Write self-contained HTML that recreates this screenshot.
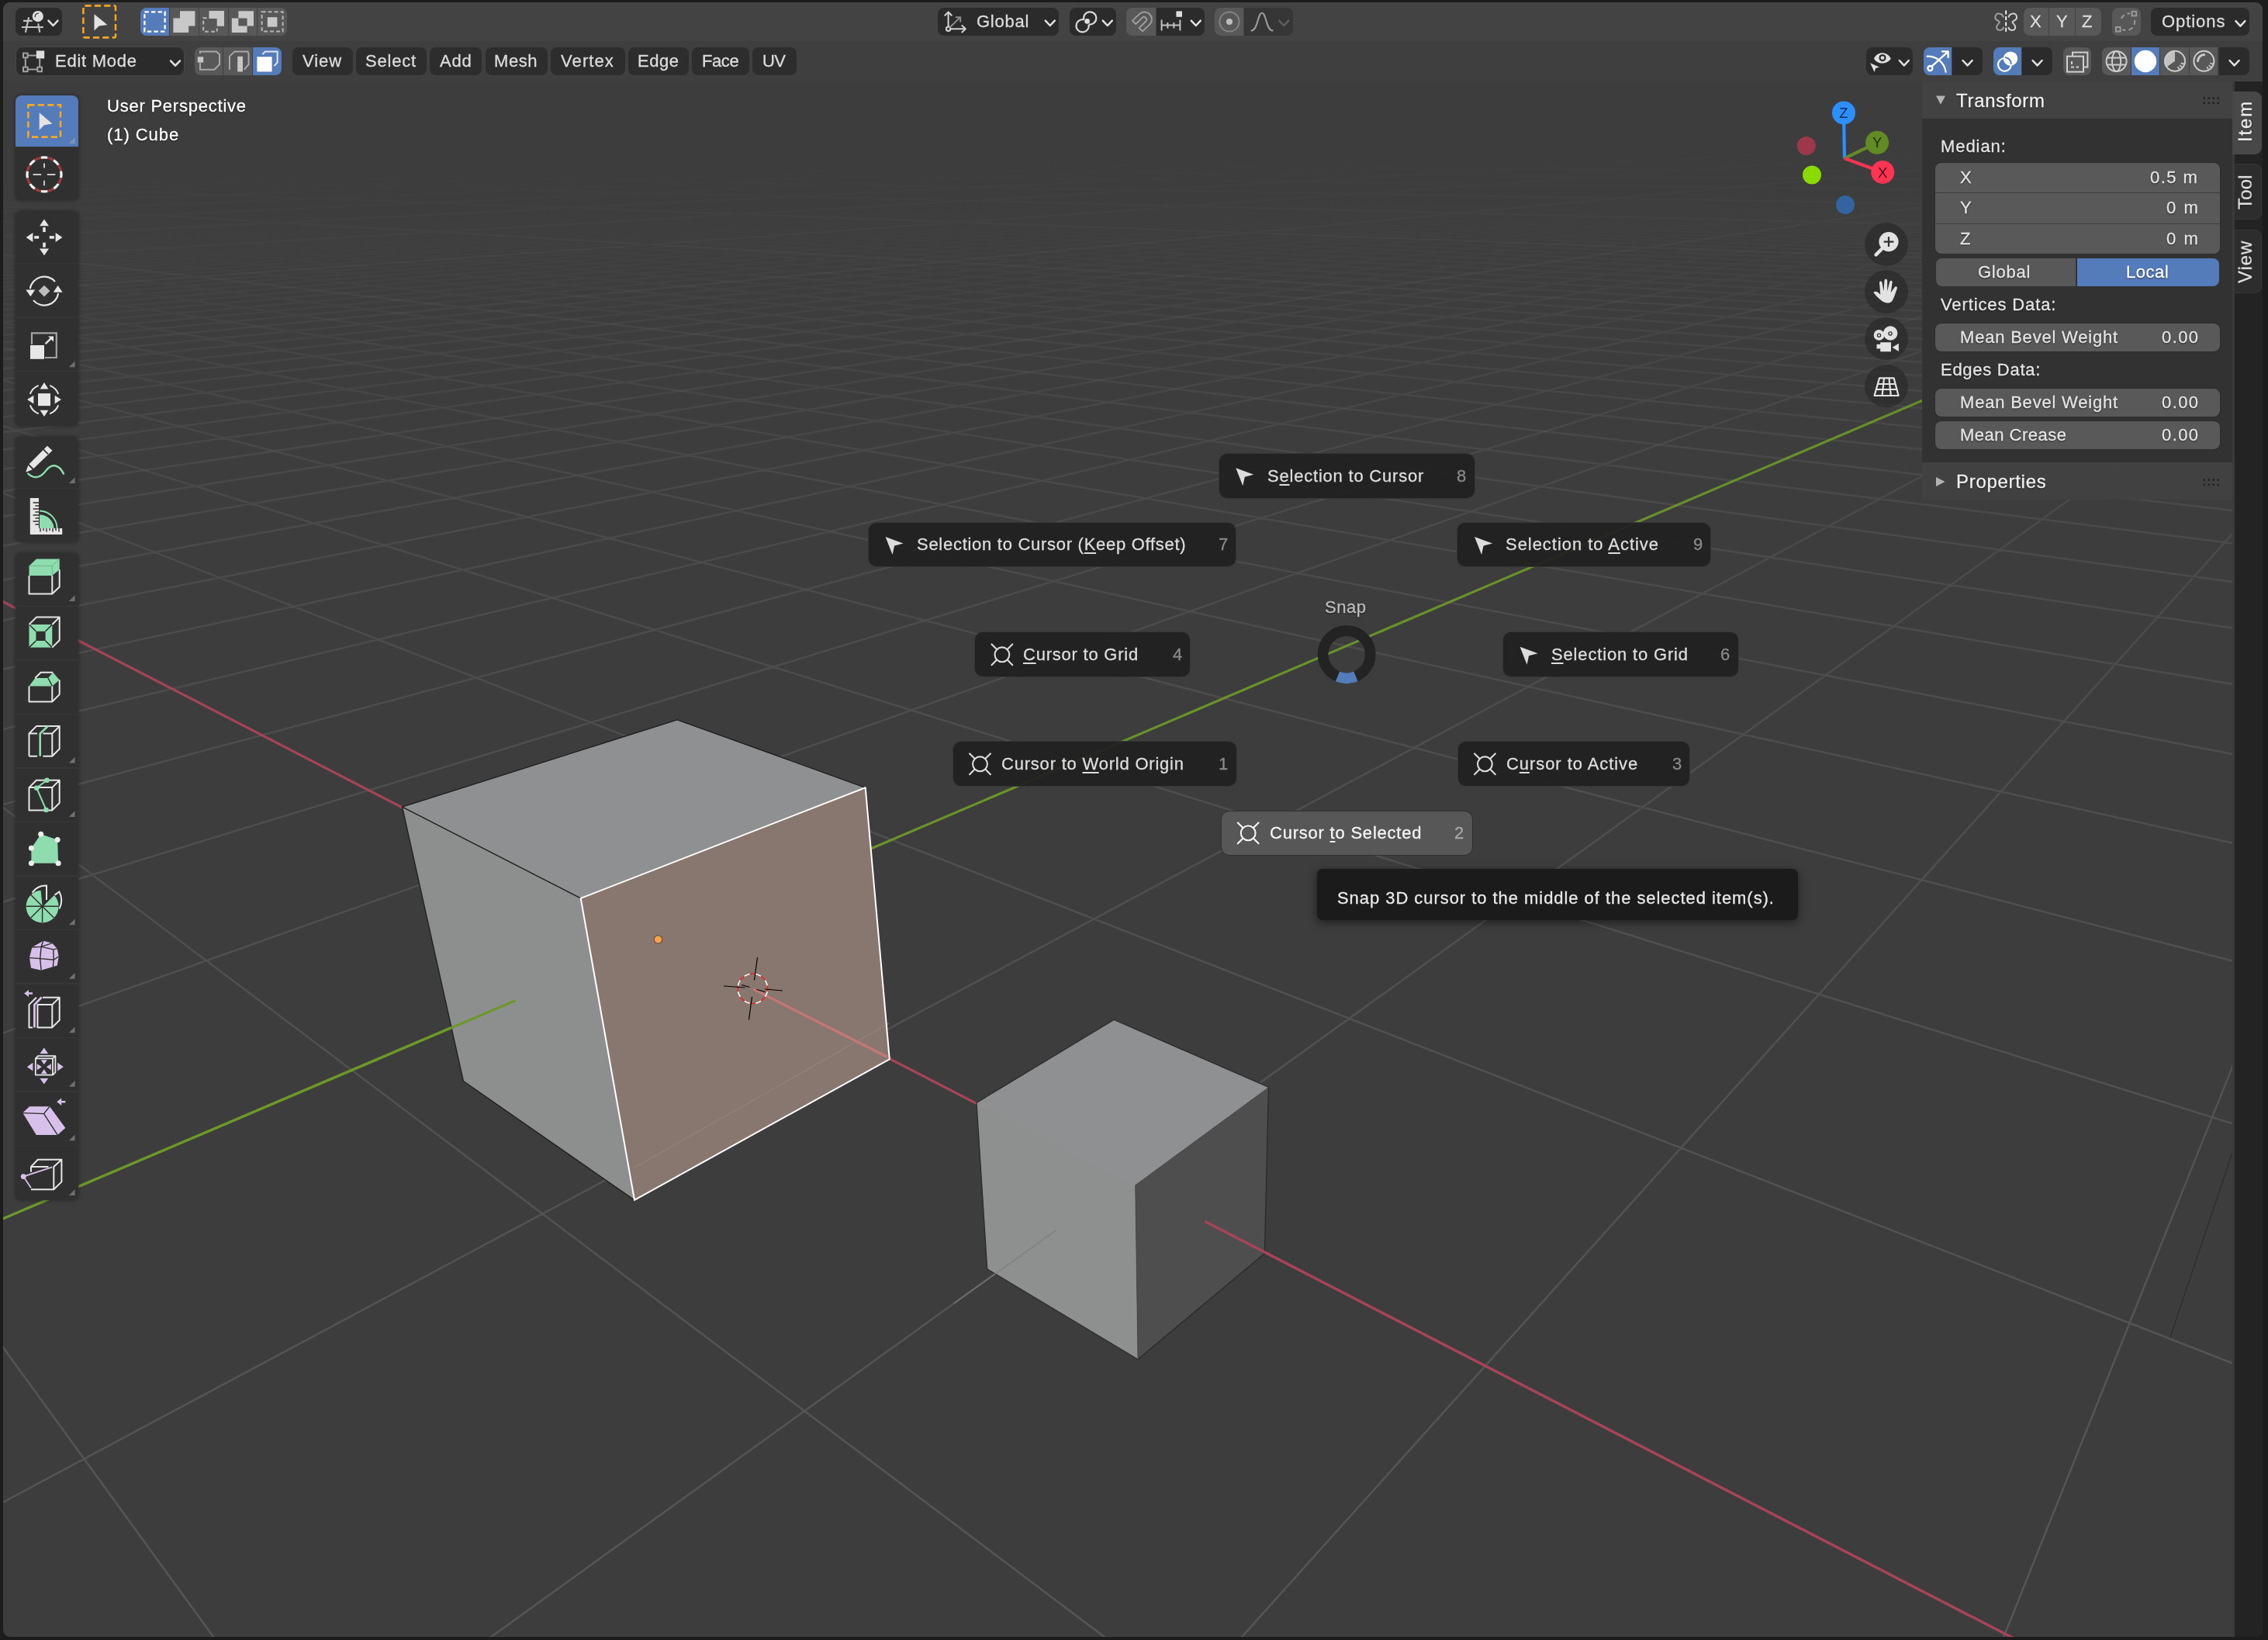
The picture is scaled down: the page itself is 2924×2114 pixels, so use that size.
<!DOCTYPE html>
<html><head><meta charset="utf-8"><title>Blender</title>
<style>
html,body{margin:0;padding:0;}
body{width:2924px;height:2114px;background:#1c1c1c;position:relative;overflow:hidden;font-family:"Liberation Sans",sans-serif;}
.a{position:absolute;box-sizing:border-box;}
.t{position:absolute;white-space:nowrap;font-family:"Liberation Sans",sans-serif;will-change:transform;-webkit-text-stroke:0.3px currentColor;}
.ts{position:absolute;white-space:nowrap;font-family:"Liberation Sans",sans-serif;will-change:transform;-webkit-text-stroke:0.3px currentColor;text-shadow:0 1px 2px rgba(0,0,0,.7);}
svg{position:absolute;left:0;top:0;}
u{text-decoration:underline;text-underline-offset:3px;text-decoration-thickness:1.5px;}
</style></head><body>

<div class="a" id="view" style="left:4px;top:3px;width:2913px;height:2107px;border-radius:9px;overflow:hidden;background:#3d3d3d;">
<svg width="2924" height="2114" viewBox="0 0 2924 2114" style="left:-4px;top:-3px;">
<defs><linearGradient id="g1" gradientUnits="userSpaceOnUse" x1="1460" y1="162" x2="1489.4" y2="2162"><stop offset="0.0000" stop-color="#565656" stop-opacity="0"/><stop offset="0.0475" stop-color="#565656" stop-opacity="0"/><stop offset="0.0700" stop-color="#565656" stop-opacity="0.09"/><stop offset="0.0920" stop-color="#565656" stop-opacity="0.16"/><stop offset="0.1370" stop-color="#565656" stop-opacity="0.32"/><stop offset="0.2270" stop-color="#565656" stop-opacity="0.48"/><stop offset="0.4320" stop-color="#565656" stop-opacity="0.67"/><stop offset="0.7870" stop-color="#565656" stop-opacity="0.91"/><stop offset="0.9750" stop-color="#565656" stop-opacity="0.97"/></linearGradient><linearGradient id="g10" gradientUnits="userSpaceOnUse" x1="1460" y1="162" x2="1489.4" y2="2162"><stop offset="0.0000" stop-color="#565656" stop-opacity="0"/><stop offset="0.0195" stop-color="#565656" stop-opacity="0"/><stop offset="0.0420" stop-color="#565656" stop-opacity="0.08"/><stop offset="0.0720" stop-color="#565656" stop-opacity="0.2"/><stop offset="0.1370" stop-color="#565656" stop-opacity="0.34"/><stop offset="0.2270" stop-color="#565656" stop-opacity="0.48"/><stop offset="0.4320" stop-color="#565656" stop-opacity="0.67"/><stop offset="0.7870" stop-color="#565656" stop-opacity="0.91"/><stop offset="0.9750" stop-color="#565656" stop-opacity="0.97"/></linearGradient><linearGradient id="gr" gradientUnits="userSpaceOnUse" x1="1460" y1="162" x2="1489.4" y2="2162"><stop offset="0.0000" stop-color="#ac4459" stop-opacity="0"/><stop offset="0.0195" stop-color="#ac4459" stop-opacity="0"/><stop offset="0.0500" stop-color="#ac4459" stop-opacity="0.35"/><stop offset="0.1000" stop-color="#ac4459" stop-opacity="0.7"/><stop offset="0.2000" stop-color="#ac4459" stop-opacity="0.9"/><stop offset="0.4320" stop-color="#ac4459" stop-opacity="0.96"/><stop offset="0.9750" stop-color="#ac4459" stop-opacity="1"/></linearGradient><linearGradient id="gg" gradientUnits="userSpaceOnUse" x1="1460" y1="162" x2="1489.4" y2="2162"><stop offset="0.0000" stop-color="#6c9828" stop-opacity="0"/><stop offset="0.0195" stop-color="#6c9828" stop-opacity="0"/><stop offset="0.0500" stop-color="#6c9828" stop-opacity="0.35"/><stop offset="0.1000" stop-color="#6c9828" stop-opacity="0.7"/><stop offset="0.2000" stop-color="#6c9828" stop-opacity="0.9"/><stop offset="0.4320" stop-color="#6c9828" stop-opacity="0.96"/><stop offset="0.9750" stop-color="#6c9828" stop-opacity="1"/></linearGradient></defs>
<path d="M-20.0 237.9L2431.1 162.7M-20.0 238.3L2437.1 162.7M-20.0 238.8L2443.2 162.6M-20.0 239.2L2449.3 162.5M-20.0 239.7L2455.4 162.5M-20.0 240.2L2461.5 162.4M-20.0 240.7L2467.6 162.4M-20.0 241.1L2473.8 162.3M-20.0 241.6L2480.0 162.2M-20.0 242.7L2492.4 162.1M-20.0 243.2L2498.6 162.0M-20.0 243.7L2504.9 162.0M-20.0 244.2L2511.2 161.9M-20.0 244.8L2517.5 161.8M-20.0 245.4L2523.8 161.8M-20.0 245.9L2530.2 161.7M-20.0 246.5L2536.6 161.6M-20.0 247.1L2543.0 161.6M-20.0 248.3L2555.8 161.4M-20.0 249.0L2562.3 161.4M-20.0 249.6L2568.8 161.3M-20.0 250.2L2575.3 161.2M-20.0 250.9L2581.9 161.2M-20.0 251.6L2588.4 161.1M-20.0 252.3L2595.0 161.0M-20.0 253.0L2601.6 160.9M-20.0 253.7L2608.2 160.9M-20.0 255.2L2621.6 160.7M-20.0 256.0L2628.3 160.7M-20.0 256.8L2635.0 160.6M-20.0 257.6L2641.8 160.5M-20.0 258.4L2648.5 160.5M-20.0 259.2L2655.3 160.4M-20.0 260.1L2662.2 160.3M-20.0 261.0L2669.0 160.2M-20.0 261.9L2675.9 160.2M-20.0 263.7L2689.7 160.0M-20.0 264.7L2696.7 160.0M-20.0 265.7L2703.6 159.9M-20.0 266.7L2710.6 159.8M-20.0 267.7L2717.7 159.7M-20.0 268.8L2724.7 159.7M-20.0 269.9L2731.8 159.6M-20.0 271.0L2738.9 159.5M-20.0 272.2L2746.0 159.4M-20.0 274.6L2760.4 159.3M-20.0 275.8L2767.6 159.2M-20.0 277.1L2774.8 159.1M-20.0 278.4L2782.1 159.1M-20.0 279.8L2789.4 159.0M-20.0 281.2L2796.7 158.9M-20.0 282.6L2804.0 158.8M-20.0 284.1L2811.4 158.8M-20.0 285.6L2818.8 158.7M-20.0 288.8L2833.7 158.5M-20.0 290.5L2841.2 158.4M-20.0 292.2L2848.7 158.4M-20.0 294.0L2856.3 158.3M-20.0 295.8L2863.8 158.2M-20.0 297.7L2871.4 158.1M-20.0 299.7L2879.1 158.0M-20.0 301.8L2886.7 158.0M-20.0 303.9L2894.4 157.9M-20.0 308.3L2909.9 157.7M-20.0 310.7L2917.7 157.6M-20.0 313.1L2925.5 157.6M-20.0 315.7L2933.3 157.5M-20.0 318.3L2941.2 157.4M-20.0 321.1L2944.0 157.6M-20.0 324.0L2944.0 158.0M-20.0 327.0L2944.0 158.3M-20.0 330.1L2944.0 158.7M-20.0 336.8L2944.0 159.6M-20.0 340.4L2944.0 160.0M-20.0 344.1L2944.0 160.5M-20.0 348.0L2944.0 161.0M-20.0 352.2L2944.0 161.5M-20.0 356.5L2944.0 162.1M-20.0 361.1L2944.0 162.7M-20.0 365.9L2944.0 163.3M-20.0 371.0L2944.0 163.9M-20.0 382.1L2944.0 165.3M-20.0 388.1L2944.0 166.1M-20.0 394.5L2944.0 166.9M-20.0 401.4L2944.0 167.8M-20.0 408.7L2944.0 168.7M-20.0 416.5L2944.0 169.7M-20.0 424.9L2944.0 170.8M-20.0 433.9L2944.0 171.9M-20.0 443.6L2944.0 173.2M-20.0 465.4L2944.0 175.9M-20.0 477.7L2944.0 177.5M-20.0 491.2L2944.0 179.2M-20.0 506.0L2944.0 181.1M-20.0 522.3L2944.0 183.2M-20.0 540.3L2944.0 185.5M-20.0 560.3L2944.0 188.0M-20.0 582.8L2944.0 190.9M-20.0 608.0L2944.0 194.1M-20.0 669.5L2944.0 201.9M-20.0 707.5L2944.0 206.7M-20.0 751.9L2944.0 212.4M-20.0 804.5L2944.0 219.1M-20.0 867.9L2944.0 227.1M-20.0 945.7L2944.0 237.0M-20.0 1043.4L2944.0 249.5M-20.0 1169.9L2944.0 265.5M-20.0 1703.8L292.6 2134.0M-20.0 1340.0L2944.0 287.2M-20.0 1022.9L1455.7 2134.0M-20.0 1949.2L2944.0 364.7M-20.0 626.3L2944.0 1782.9M599.8 2134.0L2944.0 445.0M-20.0 541.7L2944.0 1468.9M1579.5 2134.0L2944.0 614.7M-20.0 484.3L2944.0 1255.7M2573.7 2134.0L2944.0 1210.7M-20.0 442.8L2944.0 1101.4M-20.0 411.3L2944.0 984.7M-20.0 386.6L2944.0 893.2M-20.0 366.8L2944.0 819.6M-20.0 350.5L2944.0 759.1M-20.0 336.9L2944.0 708.5M-20.0 315.4L2944.0 628.6M-20.0 306.7L2944.0 596.6M-20.0 299.2L2944.0 568.4M-20.0 292.5L2944.0 543.6M-20.0 286.5L2944.0 521.5M-20.0 281.2L2944.0 501.6M-20.0 276.3L2944.0 483.8M-20.0 272.0L2944.0 467.6M-20.0 268.0L2944.0 452.8M-20.0 261.1L2944.0 427.0M-20.0 258.0L2944.0 415.7M-20.0 255.2L2944.0 405.2M-20.0 252.5L2944.0 395.4M-20.0 250.1L2944.0 386.4M-20.0 247.8L2944.0 378.0M-20.0 245.7L2944.0 370.1M-20.0 243.7L2944.0 362.7M-20.0 241.9L2944.0 355.8M-20.0 238.5L2944.0 343.2M-20.0 236.9L2944.0 337.5M-20.0 235.5L2944.0 332.0M-20.0 234.1L2944.0 326.9M-20.0 232.8L2944.0 322.0M-20.0 231.5L2944.0 317.3M-20.0 230.3L2944.0 312.9M-20.0 229.2L2944.0 308.7M-20.0 228.1L2944.0 304.7M-20.0 226.1L2944.0 297.3M-20.0 225.2L2944.0 293.8M-20.0 224.3L2944.0 290.5M-20.0 223.4L2944.0 287.3M-20.0 222.6L2944.0 284.3M-20.0 221.8L2944.0 281.3M-20.0 221.0L2944.0 278.5M-20.0 220.3L2944.0 275.8M-20.0 219.6L2944.0 273.2M-20.0 218.3L2944.0 268.3M-20.0 217.7L2944.0 266.0M-20.0 217.1L2944.0 263.8M-20.0 216.5L2944.0 261.6M-20.0 215.9L2944.0 259.5M-20.0 215.4L2944.0 257.5M-20.0 214.9L2944.0 255.6M-20.0 214.3L2944.0 253.7M-20.0 213.9L2944.0 251.8M-20.0 212.9L2944.0 248.4M-20.0 212.5L2944.0 246.7M-20.0 212.0L2944.0 245.1M-20.0 211.6L2944.0 243.5M-20.0 211.2L2944.0 242.0M-20.0 210.8L2944.0 240.5M-20.0 210.4L2944.0 239.1M-20.0 210.1L2944.0 237.7M-20.0 209.7L2944.0 236.4M-20.0 209.0L2944.0 233.8M-20.0 208.7L2944.0 232.5M-20.0 208.3L2944.0 231.3M-20.0 208.0L2944.0 230.1M-20.0 207.7L2944.0 229.0M-20.0 207.4L2944.0 227.9M-20.0 207.1L2944.0 226.8M-20.0 206.8L2944.0 225.7M-20.0 206.5L2944.0 224.7M-20.0 206.0L2944.0 222.7M-20.0 205.7L2944.0 221.7M-20.0 205.5L2944.0 220.7M-20.0 205.2L2944.0 219.8M-20.0 205.0L2944.0 218.9M-20.0 204.7L2944.0 218.0M-20.0 204.5L2944.0 217.2M-20.0 204.3L2944.0 216.3M-20.0 204.1L2944.0 215.5M-20.0 203.6L2944.0 213.9M-20.0 203.4L2944.0 213.1M-20.0 203.2L2944.0 212.4M-20.0 203.0L2944.0 211.6M-20.0 202.8L2944.0 210.9M-20.0 202.6L2944.0 210.2M-20.0 202.4L2944.0 209.5M-20.0 202.3L2944.0 208.8M-20.0 202.1L2944.0 208.1M-20.0 201.7L2944.0 206.8M-20.0 201.6L2944.0 206.2M-20.0 201.4L2944.0 205.6M-20.0 201.2L2944.0 205.0M-20.0 201.1L2944.0 204.4M-20.0 200.9L2944.0 203.8M-20.0 200.7L2944.0 203.2M-20.0 200.6L2944.0 202.6M-20.0 200.4L2944.0 202.1M-12.0 200.2L2944.0 201.0M-4.7 200.0L2944.0 200.5M2.5 199.9L2944.0 199.9M9.7 199.7L2944.0 199.4M16.8 199.6L2944.0 198.9M24.0 199.5L2944.0 198.4M31.1 199.3L2944.0 197.9M38.2 199.2L2944.0 197.5M45.2 199.0L2944.0 197.0" stroke="url(#g1)" stroke-width="2.5" fill="none"/>
<path d="M-20.0 237.5L2425.1 162.8M-20.0 242.1L2486.2 162.2M-20.0 247.7L2549.4 161.5M-20.0 254.5L2614.9 160.8M-20.0 262.8L2682.8 160.1M-20.0 273.4L2753.2 159.4M-20.0 287.2L2826.2 158.6M-20.0 306.1L2902.1 157.8M-20.0 333.4L2944.0 159.2M-20.0 376.4L2944.0 164.6M-20.0 454.0L2944.0 174.5M-20.0 636.7L2944.0 197.7M-20.0 325.3L2944.0 665.5M-20.0 264.4L2944.0 439.4M-20.0 240.1L2944.0 349.3M-20.0 227.1L2944.0 300.9M-20.0 218.9L2944.0 270.7M-20.0 213.4L2944.0 250.1M-20.0 209.3L2944.0 235.1M-20.0 206.3L2944.0 223.7M-20.0 203.8L2944.0 214.7M-20.0 201.9L2944.0 207.5M-19.3 200.3L2944.0 201.5M52.2 198.9L2944.0 196.5" stroke="url(#g10)" stroke-width="2.5" fill="none"/>
<path d="M-20.0 763.3L2639.2 2134.0" stroke="url(#gr)" stroke-width="3.1" fill="none"/>
<path d="M-20.0 1581.1L2944.0 317.8" stroke="url(#gg)" stroke-width="3.1" fill="none"/>
<path d="M2798 1723.5L2878 1486" stroke="#2c2c2c" stroke-width="1.2" fill="none"/>
<polygon points="873.1,927.8 518.6,1040.2 748.7,1157.9 1115.7,1015.3" fill="#8f9091"/>
<polygon points="518.6,1040.2 748.7,1157.9 818.0,1546.9 597.4,1393.5" fill="#8d8f8f"/>
<polygon points="748.7,1157.9 1115.7,1015.3 1146.8,1365.3 818.0,1546.9" fill="#88776e"/>
<path d="M818 1505L1146 1319" stroke="#968880" stroke-width="1.6" fill="none" opacity="0.55"/>
<path d="M971 1274.9L1144 1362.5" stroke="#c47776" stroke-width="3.1" fill="none"/>
<path d="M1115.7,1015.3L873.1,927.8L518.6,1040.2L597.4,1393.5L818.0,1546.9M518.6,1040.2L748.7,1157.9" stroke="#1e1e1e" stroke-width="1.3" fill="none" stroke-linejoin="round"/>
<polygon points="748.7,1157.9 1115.7,1015.3 1146.8,1365.3 818.0,1546.9" fill="none" stroke="#ffffff" stroke-width="2" stroke-linejoin="round"/>
<path d="M-20 1581.1L664.5 1289.8" stroke="#6c9828" stroke-width="3.1" fill="none"/>
<circle cx="848.4" cy="1211" r="5.2" fill="#ffa245" stroke="#6e5446" stroke-width="1.3"/>
<path d="M966.6 1255.4A19.3 19.3 0 0 1 974.2 1255.4" stroke="#ee2222" stroke-width="1.5" fill="none"/>
<path d="M974.2 1255.4A19.3 19.3 0 0 1 981.1 1258.3" stroke="#ffffff" stroke-width="1.5" fill="none"/>
<path d="M981.1 1258.3A19.3 19.3 0 0 1 986.4 1263.6" stroke="#ee2222" stroke-width="1.5" fill="none"/>
<path d="M986.4 1263.6A19.3 19.3 0 0 1 989.3 1270.5" stroke="#ffffff" stroke-width="1.5" fill="none"/>
<path d="M989.3 1270.5A19.3 19.3 0 0 1 989.3 1278.1" stroke="#ee2222" stroke-width="1.5" fill="none"/>
<path d="M989.3 1278.1A19.3 19.3 0 0 1 986.4 1285.0" stroke="#ffffff" stroke-width="1.5" fill="none"/>
<path d="M986.4 1285.0A19.3 19.3 0 0 1 981.1 1290.3" stroke="#ee2222" stroke-width="1.5" fill="none"/>
<path d="M981.1 1290.3A19.3 19.3 0 0 1 974.2 1293.2" stroke="#ffffff" stroke-width="1.5" fill="none"/>
<path d="M974.2 1293.2A19.3 19.3 0 0 1 966.6 1293.2" stroke="#ee2222" stroke-width="1.5" fill="none"/>
<path d="M966.6 1293.2A19.3 19.3 0 0 1 959.7 1290.3" stroke="#ffffff" stroke-width="1.5" fill="none"/>
<path d="M959.7 1290.3A19.3 19.3 0 0 1 954.4 1285.0" stroke="#ee2222" stroke-width="1.5" fill="none"/>
<path d="M954.4 1285.0A19.3 19.3 0 0 1 951.5 1278.1" stroke="#ffffff" stroke-width="1.5" fill="none"/>
<path d="M951.5 1278.1A19.3 19.3 0 0 1 951.5 1270.5" stroke="#ee2222" stroke-width="1.5" fill="none"/>
<path d="M951.5 1270.5A19.3 19.3 0 0 1 954.4 1263.6" stroke="#ffffff" stroke-width="1.5" fill="none"/>
<path d="M954.4 1263.6A19.3 19.3 0 0 1 959.7 1258.3" stroke="#ee2222" stroke-width="1.5" fill="none"/>
<path d="M959.7 1258.3A19.3 19.3 0 0 1 966.6 1255.4" stroke="#ffffff" stroke-width="1.5" fill="none"/>
<path d="M976.5 1234L972.5 1263.5M969.5 1285L965.5 1314.5M933 1271L960.5 1273M986 1275L1009 1277M956 1269.5L966.5 1272.5M975.5 1275.5L986.5 1278.5" stroke="#000" stroke-width="1.2" fill="none"/>
<polygon points="1436.2,1314.5 1259.0,1421.5 1463.7,1527.5 1635.5,1401.5" fill="#8f9091"/>
<polygon points="1259.0,1421.5 1463.7,1527.5 1467.0,1752.2 1272.7,1635.7" fill="#8e908f"/>
<polygon points="1463.7,1527.5 1635.5,1401.5 1630.4,1615.7 1467.0,1752.2" fill="#4f4e4f"/>
<path d="M1259.0,1421.5L1463.7,1527.5" stroke="#959697" stroke-width="1.2" fill="none" opacity="0.7"/>
<polygon points="1436.2,1314.5 1259.0,1421.5 1272.7,1635.7 1467.0,1752.2 1630.4,1615.7 1635.5,1401.5" fill="none" stroke="#2a2a2a" stroke-width="1.3" stroke-linejoin="round"/>
<path d="M1463.7,1527.5L1467.0,1752.2" stroke="#3c3c3c" stroke-width="1" fill="none" opacity="0.6"/>
<path d="M1230 1680L1361.5 1585.8" stroke="#7c7e7e" stroke-width="1.5" fill="none" opacity="0.8"/>
<path d="M1553.6 1574.5L2639.2 2134" stroke="#a84458" stroke-width="3.1" fill="none"/>
</svg>
</div>
<div class="a" style="left:4.0px;top:3.0px;width:2913.0px;height:50.0px;background:#434343;border-radius:9px 9px 0 0;"></div>
<div class="a" style="left:4.0px;top:53.0px;width:2913.0px;height:52.0px;background:rgba(66,66,66,0.45);"></div>
<div class="a" style="left:20.0px;top:10.0px;width:60.0px;height:36.0px;background:#2b2b2b;border-radius:8px;"></div>
<div class="a" style="left:181.0px;top:10.0px;width:36.9px;height:36.0px;background:#547bba;border-radius:8px 0 0 8px;"></div>
<div class="a" style="left:218.9px;top:10.0px;width:36.9px;height:36.0px;background:#585858;border-radius:0;"></div>
<div class="a" style="left:256.7px;top:10.0px;width:36.9px;height:36.0px;background:#585858;border-radius:0;"></div>
<div class="a" style="left:294.5px;top:10.0px;width:36.9px;height:36.0px;background:#585858;border-radius:0;"></div>
<div class="a" style="left:332.3px;top:10.0px;width:37.3px;height:36.0px;background:#585858;border-radius:0 8px 8px 0;"></div>
<div class="a" style="left:1209.0px;top:10.0px;width:156.0px;height:36.0px;background:#2b2b2b;border-radius:8px;"></div>
<div class="t" style="left:1258.7px;top:17.3px;font-size:22px;line-height:22px;letter-spacing:0.75px;color:#dcdcdc;">Global</div>
<div class="a" style="left:1379.0px;top:10.0px;width:60.0px;height:36.0px;background:#2b2b2b;border-radius:8px;"></div>
<div class="a" style="left:1451.6px;top:10.0px;width:38.4px;height:36.0px;background:#585858;border-radius:8px 0 0 8px;"></div>
<div class="a" style="left:1490.8px;top:10.0px;width:62.2px;height:36.0px;background:#2b2b2b;border-radius:0 8px 8px 0;"></div>
<div class="a" style="left:1566.4px;top:10.0px;width:37.1px;height:36.0px;background:#585858;border-radius:8px 0 0 8px;"></div>
<div class="a" style="left:1604.0px;top:10.0px;width:63.0px;height:36.0px;background:#363636;border-radius:0 8px 8px 0;"></div>
<div class="a" style="left:2608.6px;top:10.0px;width:32.0px;height:36.0px;background:#585858;border-radius:8px 0 0 8px;"></div>
<div class="t" style="left:2616.6px;top:17.3px;font-size:22px;line-height:22px;letter-spacing:0.00px;color:#dcdcdc;">X</div>
<div class="a" style="left:2641.6px;top:10.0px;width:33.0px;height:36.0px;background:#585858;border-radius:0;"></div>
<div class="t" style="left:2650.8px;top:17.3px;font-size:22px;line-height:22px;letter-spacing:0.00px;color:#dcdcdc;">Y</div>
<div class="a" style="left:2675.6px;top:10.0px;width:33.7px;height:36.0px;background:#585858;border-radius:0 8px 8px 0;"></div>
<div class="t" style="left:2684.4px;top:17.3px;font-size:22px;line-height:22px;letter-spacing:0.00px;color:#dcdcdc;">Z</div>
<div class="a" style="left:2723.0px;top:10.0px;width:36.5px;height:36.0px;background:#585858;border-radius:8px;"></div>
<div class="a" style="left:2773.4px;top:10.0px;width:126.6px;height:36.0px;background:#2b2b2b;border-radius:8px;"></div>
<div class="t" style="left:2787.0px;top:17.3px;font-size:22px;line-height:22px;letter-spacing:0.94px;color:#dcdcdc;">Options</div>
<div class="a" style="left:20.0px;top:60.0px;width:218.0px;height:37.6px;background:#2b2b2b;border-radius:9px;border:1px solid #474747;"></div>
<div class="t" style="left:70.8px;top:68.0px;font-size:22px;line-height:22px;letter-spacing:0.75px;color:#dcdcdc;">Edit Mode</div>
<div class="a" style="left:250.6px;top:61.0px;width:36.8px;height:36.0px;background:#585858;border-radius:8px 0 0 8px;"></div>
<div class="a" style="left:288.4px;top:61.0px;width:36.8px;height:36.0px;background:#585858;border-radius:0;"></div>
<div class="a" style="left:326.2px;top:61.0px;width:36.8px;height:36.0px;background:#547bba;border-radius:0 8px 8px 0;"></div>
<div class="a" style="left:377.3px;top:61.0px;width:77.7px;height:36.0px;background:#2d2d2d;border-radius:8px;"></div>
<div class="t" style="left:390.3px;top:68.0px;font-size:22px;line-height:22px;letter-spacing:0.94px;color:#dcdcdc;">View</div>
<div class="a" style="left:459.3px;top:61.0px;width:90.7px;height:36.0px;background:#2d2d2d;border-radius:8px;"></div>
<div class="t" style="left:471.3px;top:68.0px;font-size:22px;line-height:22px;letter-spacing:0.79px;color:#dcdcdc;">Select</div>
<div class="a" style="left:554.4px;top:61.0px;width:66.9px;height:36.0px;background:#2d2d2d;border-radius:8px;"></div>
<div class="t" style="left:566.6px;top:68.0px;font-size:22px;line-height:22px;letter-spacing:0.83px;color:#dcdcdc;">Add</div>
<div class="a" style="left:625.7px;top:61.0px;width:80.0px;height:36.0px;background:#2d2d2d;border-radius:8px;"></div>
<div class="t" style="left:637.1px;top:68.0px;font-size:22px;line-height:22px;letter-spacing:0.60px;color:#dcdcdc;">Mesh</div>
<div class="a" style="left:710.0px;top:61.0px;width:96.0px;height:36.0px;background:#2d2d2d;border-radius:8px;"></div>
<div class="t" style="left:723.3px;top:68.0px;font-size:22px;line-height:22px;letter-spacing:1.09px;color:#dcdcdc;">Vertex</div>
<div class="a" style="left:810.0px;top:61.0px;width:78.0px;height:36.0px;background:#2d2d2d;border-radius:8px;"></div>
<div class="t" style="left:821.7px;top:68.0px;font-size:22px;line-height:22px;letter-spacing:0.57px;color:#dcdcdc;">Edge</div>
<div class="a" style="left:892.4px;top:61.0px;width:73.8px;height:36.0px;background:#2d2d2d;border-radius:8px;"></div>
<div class="t" style="left:904.7px;top:68.0px;font-size:22px;line-height:22px;letter-spacing:-0.42px;color:#dcdcdc;">Face</div>
<div class="a" style="left:970.0px;top:61.0px;width:56.8px;height:36.0px;background:#2d2d2d;border-radius:8px;"></div>
<div class="t" style="left:982.7px;top:68.0px;font-size:22px;line-height:22px;letter-spacing:-0.72px;color:#dcdcdc;">UV</div>
<div class="a" style="left:2405.7px;top:61.0px;width:60.6px;height:36.0px;background:#2b2b2b;border-radius:8px;"></div>
<div class="a" style="left:2480.0px;top:61.0px;width:36.4px;height:36.0px;background:#547bba;border-radius:8px 0 0 8px;"></div>
<div class="a" style="left:2517.2px;top:61.0px;width:39.1px;height:36.0px;background:#2b2b2b;border-radius:0 8px 8px 0;"></div>
<div class="a" style="left:2570.0px;top:61.0px;width:36.4px;height:36.0px;background:#547bba;border-radius:8px 0 0 8px;"></div>
<div class="a" style="left:2607.4px;top:61.0px;width:38.8px;height:36.0px;background:#2b2b2b;border-radius:0 8px 8px 0;"></div>
<div class="a" style="left:2660.0px;top:61.0px;width:36.0px;height:36.0px;background:#585858;border-radius:8px;"></div>
<div class="a" style="left:2710.3px;top:61.0px;width:36.6px;height:36.0px;background:#585858;border-radius:8px 0 0 8px;"></div>
<div class="a" style="left:2747.8px;top:61.0px;width:36.6px;height:36.0px;background:#547bba;border-radius:0;"></div>
<div class="a" style="left:2785.3px;top:61.0px;width:36.6px;height:36.0px;background:#585858;border-radius:0;"></div>
<div class="a" style="left:2822.8px;top:61.0px;width:36.6px;height:36.0px;background:#585858;border-radius:0;"></div>
<div class="a" style="left:2861.4px;top:61.0px;width:38.6px;height:36.0px;background:#2b2b2b;border-radius:0 8px 8px 0;"></div>
<div class="a" style="left:20.0px;top:123.0px;width:81.0px;height:135.4px;background:#373737;border-radius:8px;box-shadow:0 0 3px 1.5px rgba(20,20,20,0.28);"></div>
<div class="a" style="left:20.0px;top:123.0px;width:81.0px;height:66.4px;background:#547bba;border-radius:8px 8px 0 0;"></div>
<div class="a" style="left:20.0px;top:190.2px;width:81.0px;height:68.2px;background:#303030;border-radius:0 0 8px 8px;"></div>
<div class="a" style="left:20.0px;top:272.2px;width:81.0px;height:276.4px;background:#373737;border-radius:8px;box-shadow:0 0 3px 1.5px rgba(20,20,20,0.28);"></div>
<div class="a" style="left:20.0px;top:272.2px;width:81.0px;height:67.0px;background:#303030;border-radius:8px 8px 0 0;"></div>
<div class="a" style="left:20.0px;top:340.4px;width:81.0px;height:68.0px;background:#303030;border-radius:0 0 0 0;"></div>
<div class="a" style="left:20.0px;top:409.6px;width:81.0px;height:68.2px;background:#303030;border-radius:0 0 0 0;"></div>
<div class="a" style="left:20.0px;top:479.0px;width:81.0px;height:69.6px;background:#303030;border-radius:0 0 8px 8px;"></div>
<div class="a" style="left:20.0px;top:562.5px;width:81.0px;height:136.2px;background:#373737;border-radius:8px;box-shadow:0 0 3px 1.5px rgba(20,20,20,0.28);"></div>
<div class="a" style="left:20.0px;top:562.5px;width:81.0px;height:66.3px;background:#303030;border-radius:8px 8px 0 0;"></div>
<div class="a" style="left:20.0px;top:630.0px;width:81.0px;height:68.7px;background:#303030;border-radius:0 0 8px 8px;"></div>
<div class="a" style="left:20.0px;top:712.6px;width:81.0px;height:834.1px;background:#373737;border-radius:8px;box-shadow:0 0 3px 1.5px rgba(20,20,20,0.28);"></div>
<div class="a" style="left:20.0px;top:712.6px;width:81.0px;height:68.3px;background:#303030;border-radius:8px 8px 0 0;"></div>
<div class="a" style="left:20.0px;top:782.1px;width:81.0px;height:68.3px;background:#303030;border-radius:0 0 0 0;"></div>
<div class="a" style="left:20.0px;top:851.6px;width:81.0px;height:68.3px;background:#303030;border-radius:0 0 0 0;"></div>
<div class="a" style="left:20.0px;top:921.1px;width:81.0px;height:68.3px;background:#303030;border-radius:0 0 0 0;"></div>
<div class="a" style="left:20.0px;top:990.6px;width:81.0px;height:68.3px;background:#303030;border-radius:0 0 0 0;"></div>
<div class="a" style="left:20.0px;top:1060.1px;width:81.0px;height:68.3px;background:#303030;border-radius:0 0 0 0;"></div>
<div class="a" style="left:20.0px;top:1129.7px;width:81.0px;height:68.3px;background:#303030;border-radius:0 0 0 0;"></div>
<div class="a" style="left:20.0px;top:1199.2px;width:81.0px;height:68.3px;background:#303030;border-radius:0 0 0 0;"></div>
<div class="a" style="left:20.0px;top:1268.7px;width:81.0px;height:68.3px;background:#303030;border-radius:0 0 0 0;"></div>
<div class="a" style="left:20.0px;top:1338.2px;width:81.0px;height:68.3px;background:#303030;border-radius:0 0 0 0;"></div>
<div class="a" style="left:20.0px;top:1407.7px;width:81.0px;height:68.3px;background:#303030;border-radius:0 0 0 0;"></div>
<div class="a" style="left:20.0px;top:1477.2px;width:81.0px;height:69.5px;background:#303030;border-radius:0 0 8px 8px;"></div>
<div class="ts" style="left:137.8px;top:126.2px;font-size:22px;line-height:22px;letter-spacing:0.77px;color:#ffffff;">User Perspective</div>
<div class="ts" style="left:137.8px;top:162.8px;font-size:22px;line-height:22px;letter-spacing:0.94px;color:#ffffff;">(1) Cube</div>
<div class="a" style="left:2478.0px;top:105.0px;width:400.0px;height:48.0px;background:#424242;"></div>
<div class="a" style="left:2478.0px;top:153.0px;width:400.0px;height:443.0px;background:#323232;"></div>
<div class="a" style="left:2478.0px;top:596.0px;width:400.0px;height:48.0px;background:rgba(66,66,66,0.93);"></div>
<div class="a" style="left:2878.0px;top:105.0px;width:2.5px;height:2005.0px;background:#3a3a3a;"></div>
<div class="a" style="left:2880.5px;top:105.0px;width:36.5px;height:2005.0px;background:#232323;border-radius:0 0 9px 0;"></div>
<div class="a" style="left:2878.0px;top:117.5px;width:37.5px;height:81.5px;background:#484848;border-radius:0 9px 9px 0;"></div>
<div class="a" style="left:2880.5px;top:211.0px;width:35.0px;height:72.0px;background:#2d2d2d;border-radius:0 9px 9px 0;border:1px solid #383838;border-left:none;"></div>
<div class="a" style="left:2880.5px;top:295.5px;width:35.0px;height:82.5px;background:#2d2d2d;border-radius:0 9px 9px 0;border:1px solid #383838;border-left:none;"></div>
<div class="ts" style="left:2903.3px;top:183.0px;font-size:23.9px;line-height:23.9px;letter-spacing:1.87px;color:#f0f0f0;transform-origin:0 0;transform:rotate(-90deg) translateY(-20.2px);">Item</div>
<div class="ts" style="left:2903.3px;top:270.0px;font-size:23.9px;line-height:23.9px;letter-spacing:0.23px;color:#e0e0e0;transform-origin:0 0;transform:rotate(-90deg) translateY(-20.2px);">Tool</div>
<div class="ts" style="left:2903.3px;top:365.0px;font-size:23.9px;line-height:23.9px;letter-spacing:1.00px;color:#e0e0e0;transform-origin:0 0;transform:rotate(-90deg) translateY(-20.2px);">View</div>
<div class="ts" style="left:2521.6px;top:118.4px;font-size:23.9px;line-height:23.9px;letter-spacing:0.75px;color:#f0f0f0;">Transform</div>
<div class="ts" style="left:2521.6px;top:609.4px;font-size:23.9px;line-height:23.9px;letter-spacing:0.75px;color:#f0f0f0;">Properties</div>
<div class="ts" style="left:2502.2px;top:178.0px;font-size:22px;line-height:22px;letter-spacing:0.93px;color:#e4e4e4;">Median:</div>
<div class="a" style="left:2495.0px;top:210.0px;width:366.7px;height:117.0px;background:#3c3c3c;border-radius:8px;box-shadow:0 0 0 1px rgba(40,40,40,0.55);"></div>
<div class="a" style="left:2495.0px;top:210.0px;width:366.7px;height:37.6px;background:#595959;border-radius:8px 8px 0 0;"></div>
<div class="a" style="left:2495.0px;top:248.8px;width:366.7px;height:38.8px;background:#595959;border-radius:0;"></div>
<div class="a" style="left:2495.0px;top:288.8px;width:366.7px;height:38.2px;background:#595959;border-radius:0 0 8px 8px;"></div>
<div class="ts" style="left:2526.8px;top:218.0px;font-size:22px;line-height:22px;letter-spacing:0.00px;color:#e4e4e4;">X</div>
<div class="ts" style="left:2772.4px;top:218.0px;font-size:22px;line-height:22px;letter-spacing:1.44px;color:#e4e4e4;">0.5 m</div>
<div class="ts" style="left:2526.8px;top:257.3px;font-size:22px;line-height:22px;letter-spacing:0.00px;color:#e4e4e4;">Y</div>
<div class="ts" style="left:2792.5px;top:257.3px;font-size:22px;line-height:22px;letter-spacing:2.05px;color:#e4e4e4;">0 m</div>
<div class="ts" style="left:2526.8px;top:297.0px;font-size:22px;line-height:22px;letter-spacing:0.00px;color:#e4e4e4;">Z</div>
<div class="ts" style="left:2792.5px;top:297.0px;font-size:22px;line-height:22px;letter-spacing:2.05px;color:#e4e4e4;">0 m</div>
<div class="a" style="left:2495.5px;top:333.0px;width:180.9px;height:35.8px;background:#585858;border-radius:8px 0 0 8px;"></div>
<div class="a" style="left:2677.6px;top:333.0px;width:183.9px;height:35.8px;background:#547bba;border-radius:0 8px 8px 0;"></div>
<div class="ts" style="left:2550.0px;top:339.5px;font-size:22px;line-height:22px;letter-spacing:0.75px;color:#e4e4e4;">Global</div>
<div class="ts" style="left:2740.5px;top:339.5px;font-size:22px;line-height:22px;letter-spacing:0.52px;color:#ffffff;">Local</div>
<div class="ts" style="left:2502.2px;top:382.0px;font-size:22px;line-height:22px;letter-spacing:0.88px;color:#e4e4e4;">Vertices Data:</div>
<div class="a" style="left:2495.0px;top:417.0px;width:366.7px;height:36.0px;background:#595959;border-radius:8px;box-shadow:0 0 0 1px rgba(40,40,40,0.55);"></div>
<div class="ts" style="left:2526.8px;top:424.0px;font-size:22px;line-height:22px;letter-spacing:0.80px;color:#e4e4e4;">Mean Bevel Weight</div>
<div class="ts" style="left:2786.7px;top:424.0px;font-size:22px;line-height:22px;letter-spacing:1.39px;color:#e4e4e4;">0.00</div>
<div class="ts" style="left:2502.2px;top:466.0px;font-size:22px;line-height:22px;letter-spacing:0.72px;color:#e4e4e4;">Edges Data:</div>
<div class="a" style="left:2495.0px;top:501.0px;width:366.7px;height:36.0px;background:#595959;border-radius:8px;box-shadow:0 0 0 1px rgba(40,40,40,0.55);"></div>
<div class="ts" style="left:2526.8px;top:508.0px;font-size:22px;line-height:22px;letter-spacing:0.80px;color:#e4e4e4;">Mean Bevel Weight</div>
<div class="ts" style="left:2786.7px;top:508.0px;font-size:22px;line-height:22px;letter-spacing:1.39px;color:#e4e4e4;">0.00</div>
<div class="a" style="left:2495.0px;top:543.0px;width:366.7px;height:36.0px;background:#595959;border-radius:8px;box-shadow:0 0 0 1px rgba(40,40,40,0.55);"></div>
<div class="ts" style="left:2526.8px;top:550.0px;font-size:22px;line-height:22px;letter-spacing:0.49px;color:#e4e4e4;">Mean Crease</div>
<div class="ts" style="left:2786.7px;top:550.0px;font-size:22px;line-height:22px;letter-spacing:1.39px;color:#e4e4e4;">0.00</div>
<div class="a" style="left:2404.2px;top:287.0px;width:55.6px;height:55.6px;background:rgba(38,38,38,0.62);border-radius:28px;"></div>
<div class="a" style="left:2404.2px;top:348.0px;width:55.6px;height:55.6px;background:rgba(38,38,38,0.62);border-radius:28px;"></div>
<div class="a" style="left:2404.2px;top:408.9px;width:55.6px;height:55.6px;background:rgba(38,38,38,0.62);border-radius:28px;"></div>
<div class="a" style="left:2404.2px;top:469.5px;width:55.6px;height:55.6px;background:rgba(38,38,38,0.62);border-radius:28px;"></div>
<div class="a" style="left:1570.5px;top:584.0px;width:331.5px;height:59.0px;background:rgba(33,33,33,0.94);border-radius:11px;border:1.5px solid rgba(56,56,56,0.9);"></div>
<div class="t" style="left:1633.5px;top:602.6px;font-size:22px;line-height:22px;letter-spacing:0.79px;color:#dddddd;">S<u>e</u>lection to Cursor</div>
<div class="t" style="left:1878.2px;top:602.6px;font-size:22px;line-height:22px;letter-spacing:0.00px;color:#8a8a8a;">8</div>
<div class="a" style="left:1118.8px;top:672.6px;width:475.5px;height:58.4px;background:rgba(33,33,33,0.94);border-radius:11px;border:1.5px solid rgba(56,56,56,0.9);"></div>
<div class="t" style="left:1181.8px;top:691.2px;font-size:22px;line-height:22px;letter-spacing:0.72px;color:#dddddd;">Selection to Cursor (<u>K</u>eep Offset)</div>
<div class="t" style="left:1570.5px;top:691.2px;font-size:22px;line-height:22px;letter-spacing:0.00px;color:#8a8a8a;">7</div>
<div class="a" style="left:1878.3px;top:672.6px;width:328.0px;height:58.4px;background:rgba(33,33,33,0.94);border-radius:11px;border:1.5px solid rgba(56,56,56,0.9);"></div>
<div class="t" style="left:1941.3px;top:691.2px;font-size:22px;line-height:22px;letter-spacing:0.96px;color:#dddddd;">Selection to <u>A</u>ctive</div>
<div class="t" style="left:2182.5px;top:691.2px;font-size:22px;line-height:22px;letter-spacing:0.00px;color:#8a8a8a;">9</div>
<div class="a" style="left:1256.4px;top:814.4px;width:279.1px;height:58.6px;background:rgba(33,33,33,0.94);border-radius:11px;border:1.5px solid rgba(56,56,56,0.9);"></div>
<div class="t" style="left:1319.4px;top:833.0px;font-size:22px;line-height:22px;letter-spacing:0.77px;color:#dddddd;"><u>C</u>ursor to Grid</div>
<div class="t" style="left:1511.7px;top:833.0px;font-size:22px;line-height:22px;letter-spacing:0.00px;color:#8a8a8a;">4</div>
<div class="a" style="left:1936.8px;top:814.4px;width:305.4px;height:58.6px;background:rgba(33,33,33,0.94);border-radius:11px;border:1.5px solid rgba(56,56,56,0.9);"></div>
<div class="t" style="left:1999.8px;top:833.0px;font-size:22px;line-height:22px;letter-spacing:0.84px;color:#dddddd;"><u>S</u>election to Grid</div>
<div class="t" style="left:2218.4px;top:833.0px;font-size:22px;line-height:22px;letter-spacing:0.00px;color:#8a8a8a;">6</div>
<div class="a" style="left:1228.0px;top:955.4px;width:367.0px;height:58.6px;background:rgba(33,33,33,0.94);border-radius:11px;border:1.5px solid rgba(56,56,56,0.9);"></div>
<div class="t" style="left:1291.0px;top:974.0px;font-size:22px;line-height:22px;letter-spacing:0.79px;color:#dddddd;">Cursor to <u>W</u>orld Origin</div>
<div class="t" style="left:1571.2px;top:974.0px;font-size:22px;line-height:22px;letter-spacing:0.00px;color:#8a8a8a;">1</div>
<div class="a" style="left:1878.9px;top:955.4px;width:300.4px;height:58.6px;background:rgba(33,33,33,0.94);border-radius:11px;border:1.5px solid rgba(56,56,56,0.9);"></div>
<div class="t" style="left:1941.9px;top:974.0px;font-size:22px;line-height:22px;letter-spacing:0.93px;color:#dddddd;">C<u>u</u>rsor to Active</div>
<div class="t" style="left:2155.5px;top:974.0px;font-size:22px;line-height:22px;letter-spacing:0.00px;color:#8a8a8a;">3</div>
<div class="a" style="left:1573.7px;top:1044.5px;width:325.0px;height:58.5px;background:#575757;border-radius:11px;border:1.5px solid #303030;"></div>
<div class="t" style="left:1636.7px;top:1063.1px;font-size:22px;line-height:22px;letter-spacing:0.78px;color:#f4f4f4;">Cursor <u>t</u>o Selected</div>
<div class="t" style="left:1874.9px;top:1063.1px;font-size:22px;line-height:22px;letter-spacing:0.00px;color:#a8a8a8;">2</div>
<div class="ts" style="left:1708.2px;top:771.6px;font-size:22px;line-height:22px;letter-spacing:0.57px;color:#bdbdbd;">Snap</div>
<div class="a" style="left:1698.0px;top:1120.0px;width:620.3px;height:65.6px;background:#1b1b1b;border-radius:7px;box-shadow:0 3px 12px rgba(0,0,0,0.5);"></div>
<div class="t" style="left:1723.7px;top:1147.0px;font-size:22px;line-height:22px;letter-spacing:0.95px;color:#e8e8e8;">Snap 3D cursor to the middle of the selected item(s).</div>
<svg width="2924" height="2114" viewBox="0 0 2924 2114" style="pointer-events:none;">
<path transform="translate(1593.3,603.3)" d="M0 0L23 8.5L11.5 11.5L9 23Z" fill="#dcdcdc"/>
<path transform="translate(1141.6,691.9)" d="M0 0L23 8.5L11.5 11.5L9 23Z" fill="#dcdcdc"/>
<path transform="translate(1901.1,691.9)" d="M0 0L23 8.5L11.5 11.5L9 23Z" fill="#dcdcdc"/>
<g transform="translate(1277.9,829.4)" stroke="#dcdcdc" stroke-width="2.1" fill="none" stroke-linecap="round"><circle cx="14" cy="14.4" r="9.4"/><path d="M0.6 1L7.2 7.6M27.4 1L20.8 7.6M0.6 27.8L7.2 21.2M27.4 27.8L20.8 21.2"/></g>
<path transform="translate(1959.6,833.7)" d="M0 0L23 8.5L11.5 11.5L9 23Z" fill="#dcdcdc"/>
<g transform="translate(1249.5,970.4)" stroke="#dcdcdc" stroke-width="2.1" fill="none" stroke-linecap="round"><circle cx="14" cy="14.4" r="9.4"/><path d="M0.6 1L7.2 7.6M27.4 1L20.8 7.6M0.6 27.8L7.2 21.2M27.4 27.8L20.8 21.2"/></g>
<g transform="translate(1900.4,970.4)" stroke="#dcdcdc" stroke-width="2.1" fill="none" stroke-linecap="round"><circle cx="14" cy="14.4" r="9.4"/><path d="M0.6 1L7.2 7.6M27.4 1L20.8 7.6M0.6 27.8L7.2 21.2M27.4 27.8L20.8 21.2"/></g>
<g transform="translate(1595.2,1059.5)" stroke="#f6f6f6" stroke-width="2.1" fill="none" stroke-linecap="round"><circle cx="14" cy="14.4" r="9.4"/><path d="M0.6 1L7.2 7.6M27.4 1L20.8 7.6M0.6 27.8L7.2 21.2M27.4 27.8L20.8 21.2"/></g>
<g stroke="#c4c4c4" stroke-width="2.1" fill="none"><path d="M30 26.9H41.6M27.9 35H55.9M37.1 22.3L32.9 41.7M49.2 30.4L51.3 41.7"/></g>
<circle cx="48.8" cy="21.1" r="7.1" fill="#dedede"/><path d="M45.2 21.6A4.2 4.2 0 0 1 49.4 17.2" stroke="#3a3a3a" stroke-width="1.3" fill="none" stroke-linecap="round"/>
<path d="M62.5 26.6L68.5 33.0L74.5 26.6" stroke="#e2e2e2" stroke-width="2.5" fill="none" stroke-linecap="round" stroke-linejoin="round"/>
<rect x="107.4" y="7.4" width="41.6" height="41" rx="2" fill="none" stroke="#f2a524" stroke-width="2.6" stroke-dasharray="8.2 4.2"/>
<path d="M121.5 18.2V39.6L127.6 33.6L138.4 32Z" fill="#e2e2e2"/>
<rect x="186.4" y="15.4" width="26.2" height="25.2" fill="none" stroke="#ffffff" stroke-width="2.3" stroke-dasharray="5.4 3.2"/>
<path d="M232 14.3H251.4V33.4H243.2V42H223.4V23.4H232Z" fill="#c8c8c8"/>
<path d="M269.5 14H289V33.8H279.7V24.1H269.5Z" fill="#c8c8c8"/>
<path d="M266.6 23.2H262.2V40.8H279.8V36.6" fill="none" stroke="#b8b8b8" stroke-width="2" stroke-dasharray="4.6 3.4"/>
<path d="M307.4 14.3H327V33.4H318.6V23.4H307.4Z M298.8 23.4H307.4V33.4H318.6V42H298.8Z" fill="#c8c8c8"/>
<rect x="337.6" y="15.2" width="27" height="25.4" fill="none" stroke="#b4b4b4" stroke-width="2" stroke-dasharray="5 3"/>
<rect x="344.8" y="22.2" width="12.6" height="12.4" fill="#c8c8c8"/>
<g stroke="#a2a2a2" stroke-width="2" fill="none"><rect x="30" y="68.6" width="5.6" height="5.6"/><rect x="30" y="86.6" width="5.6" height="5.6"/><rect x="48.4" y="86.6" width="5.6" height="5.6"/><path d="M32.8 74.2V86.6M35.6 89.4H48.4M35.6 71.4H46.8M51.2 75.4V86.6"/></g>
<rect x="46.8" y="65.4" width="10.4" height="10" fill="#dedede"/>
<path d="M220.0 78.3L226.0 84.7L232.0 78.3" stroke="#e2e2e2" stroke-width="2.5" fill="none" stroke-linecap="round" stroke-linejoin="round"/>
<path d="M258 69V66.4H279L283 70.4V83L276.4 89.8H258V81" fill="none" stroke="#a8a8a8" stroke-width="2"/>
<rect x="254.8" y="73.2" width="7.4" height="7.4" fill="#c6c6c6"/>
<path d="M296 89.8V72.6L302.4 66.4H319.6L320.6 70V83L314.6 89.8" fill="none" stroke="#a8a8a8" stroke-width="2"/>
<rect x="306.2" y="72.8" width="6.8" height="19.6" fill="#c6c6c6"/>
<path d="M338.4 70L342 66.4H357.6V80.6L353.4 85" fill="none" stroke="#dfe6f2" stroke-width="2"/>
<rect x="331.4" y="73.2" width="19.2" height="19.2" fill="#ffffff"/>
<g stroke="#d0d0d0" stroke-width="2.1" fill="none" stroke-linecap="round" stroke-linejoin="round"><path d="M1222.6 34.4V15.6M1218.4 19.8L1222.6 15.4L1226.8 19.8M1225.2 37.2H1244.6M1240.4 33L1244.8 37.2L1240.4 41.4"/><circle cx="1222.6" cy="37.2" r="2.7"/></g>
<g stroke="#8e8e8e" stroke-width="2" fill="none" stroke-linecap="round" stroke-linejoin="round"><path d="M1224.8 35L1238 22.4M1232.6 22.2H1238.2V27.8"/></g>
<path d="M1347.8 26.6L1353.8 33.0L1359.8 26.6" stroke="#e2e2e2" stroke-width="2.5" fill="none" stroke-linecap="round" stroke-linejoin="round"/>
<g stroke="#d6d6d6" stroke-width="2.2" fill="none"><path d="M1403.6 31.6A8.1 8.1 0 1 1 1397.6 25.4"/><path d="M1397.4 25.6A8.1 8.1 0 1 1 1403.8 31.4"/></g><circle cx="1401.6" cy="27.4" r="3.3" fill="#e0e0e0"/>
<path d="M1421.8 26.6L1427.8 33.0L1433.8 26.6" stroke="#e2e2e2" stroke-width="2.5" fill="none" stroke-linecap="round" stroke-linejoin="round"/>
<path d="M1460 26.6L1468.6 18.4A9.4 9.4 0 0 1 1482.4 31.4L1473 40.4L1468.6 36L1477.6 27.2A3.4 3.4 0 0 0 1473 22.4L1464.4 31Z" fill="none" stroke="#9c9c9c" stroke-width="2" stroke-linejoin="round"/>
<g stroke="#c0c0c0" stroke-width="2" fill="none"><path d="M1497.6 25.6V39.6M1521.4 25.6V39.6M1497.6 32.6H1521.4M1505.4 29V36.4M1513.4 29V36.4"/></g><rect x="1516.4" y="14.4" width="7.6" height="7.4" fill="#dcdcdc"/>
<path d="M1535.8 26.6L1541.8 33.0L1547.8 26.6" stroke="#e2e2e2" stroke-width="2.5" fill="none" stroke-linecap="round" stroke-linejoin="round"/>
<circle cx="1585" cy="28" r="12.6" fill="none" stroke="#828282" stroke-width="2"/><circle cx="1585" cy="28" r="4" fill="#bdbdbd"/>
<path d="M1613.4 39.4C1621.6 39.4 1621.4 16.8 1627 16.8C1632.6 16.8 1632.4 39.4 1640.6 39.4" fill="none" stroke="#9a9a9a" stroke-width="2.1" stroke-linecap="round"/>
<path d="M1649.2 26.6L1655.2 33.0L1661.2 26.6" stroke="#5e5e5e" stroke-width="2.5" fill="none" stroke-linecap="round" stroke-linejoin="round"/>
<path d="M2582.7 21.7C2581.1 16.9 2572.3 15.2 2572.3 22.5C2572.3 26.5 2577.9 26.5 2577.9 28.6C2577.9 30.5 2573.9 31.3 2574.2 35.3C2574.5 40.1 2581.9 40.1 2583.0 35.6" stroke="#a0a0a0" stroke-width="2" fill="none" stroke-linecap="round"/>
<path d="M2589.7 21.7C2591.3 16.9 2600.1 15.2 2600.1 22.5C2600.1 26.5 2594.5 26.5 2594.5 28.6C2594.5 30.5 2598.5 31.3 2598.2 35.3C2597.9 40.1 2590.5 40.1 2589.4 35.6" stroke="#d0d0d0" stroke-width="2" fill="none" stroke-linecap="round"/>
<path d="M2586.2 13.6V42" stroke="#ffffff" stroke-width="1.8" stroke-dasharray="5 2.4" fill="none"/>
<g stroke="#9a9a9a" stroke-width="2" fill="none"><path d="M2735 24A11 11 0 0 1 2746 17.4" stroke-dasharray="6 4"/><path d="M2752 26A11 11 0 0 1 2736.4 38" stroke-dasharray="6 4"/><rect x="2748.6" y="14.8" width="5.6" height="5.6"/><rect x="2728" y="35" width="5.6" height="5.6"/></g>
<path d="M2882.4 27.2L2888.4 33.6L2894.4 27.2" stroke="#e2e2e2" stroke-width="2.5" fill="none" stroke-linecap="round" stroke-linejoin="round"/>
<path d="M2416 75.4C2420.6 66 2432.6 66 2437.8 75.4C2432.6 83.6 2420.6 83.6 2416 75.4Z" fill="#e0e0e0"/><circle cx="2427" cy="74.6" r="4.6" fill="#2b2b2b"/><circle cx="2427" cy="74.6" r="2.4" fill="#e0e0e0"/>
<path d="M2410 80L2424.6 86.6L2418.6 88.4L2416.6 94.6Z" fill="#e0e0e0" stroke="#2b2b2b" stroke-width="1.2"/>
<path d="M2448.8 78.0L2454.8 84.4L2460.8 78.0" stroke="#e2e2e2" stroke-width="2.5" fill="none" stroke-linecap="round" stroke-linejoin="round"/>
<g stroke="#ffffff" stroke-width="2.3" fill="none" stroke-linecap="round" stroke-linejoin="round"><path d="M2484.6 72.6C2496 72 2506.6 80 2508.6 92.6"/><path d="M2490.4 85.6L2511.4 66.6M2504 66.4H2511.6V74"/><circle cx="2488.4" cy="88" r="3"/></g>
<path d="M2530.6 78.0L2536.6 84.4L2542.6 78.0" stroke="#e2e2e2" stroke-width="2.5" fill="none" stroke-linecap="round" stroke-linejoin="round"/>
<circle cx="2592" cy="75.6" r="9.2" fill="#ffffff"/><circle cx="2584.4" cy="83.4" r="8.4" fill="none" stroke="#ffffff" stroke-width="2.2"/><path d="M2585 74A8.4 8.4 0 0 1 2592.8 83" stroke="#547bba" stroke-width="2" fill="none"/>
<path d="M2620.6 78.0L2626.6 84.4L2632.6 78.0" stroke="#e2e2e2" stroke-width="2.5" fill="none" stroke-linecap="round" stroke-linejoin="round"/>
<g stroke="#d0d0d0" stroke-width="2" fill="none"><path d="M2672 72.4V67.4H2691.4V86.6H2686.6"/><rect x="2665" y="72.6" width="21" height="20"/><path d="M2671 79V86.6H2680" stroke-dasharray="4 2.6"/></g>
<g stroke="#cccccc" stroke-width="2" fill="none"><circle cx="2728.6" cy="79" r="13"/><ellipse cx="2728.6" cy="79" rx="5.6" ry="13"/><path d="M2716.4 74.4H2740.8M2716.4 83.6H2740.8"/></g>
<circle cx="2766" cy="79" r="14.2" fill="#ffffff"/>
<path d="M2804 78.8V65.8A13 13 0 0 0 2793.4 86.3Z" fill="#c2c2c2"/>
<circle cx="2804" cy="78.8" r="13" fill="none" stroke="#cccccc" stroke-width="2"/><path d="M2811.8 81.3L2815.8 82.6M2810.3 84.1L2813.5 86.8M2807.8 86.0L2809.8 89.7" stroke="#cccccc" stroke-width="1.8" fill="none"/>
<circle cx="2841.4" cy="78.8" r="13" fill="none" stroke="#cccccc" stroke-width="2"/><path d="M2833.6 78.6A8 8 0 0 1 2841.6 70.6" stroke="#cccccc" stroke-width="3" fill="none" stroke-linecap="round"/><path d="M2849.2 81.3L2853.2 82.6M2847.7 84.1L2850.9 86.8M2845.2 86.0L2847.2 89.7" stroke="#bdbdbd" stroke-width="1.8" fill="none"/>
<path d="M2874.6 78.0L2880.6 84.4L2886.6 78.0" stroke="#e2e2e2" stroke-width="2.5" fill="none" stroke-linecap="round" stroke-linejoin="round"/>
<path d="M2496 123.6H2508L2502 134.8Z" fill="#b2b2b2"/>
<path d="M2496 615H2496V627L2507.6 621Z" fill="#b2b2b2"/>
<rect x="2840.6" y="125.4" width="2.4" height="2.4" fill="#1f1f1f"/>
<rect x="2846.6" y="125.4" width="2.4" height="2.4" fill="#1f1f1f"/>
<rect x="2852.6" y="125.4" width="2.4" height="2.4" fill="#1f1f1f"/>
<rect x="2858.6" y="125.4" width="2.4" height="2.4" fill="#1f1f1f"/>
<rect x="2840.6" y="131.6" width="2.4" height="2.4" fill="#1f1f1f"/>
<rect x="2846.6" y="131.6" width="2.4" height="2.4" fill="#1f1f1f"/>
<rect x="2852.6" y="131.6" width="2.4" height="2.4" fill="#1f1f1f"/>
<rect x="2858.6" y="131.6" width="2.4" height="2.4" fill="#1f1f1f"/>
<rect x="2840.6" y="617.4" width="2.4" height="2.4" fill="#1f1f1f"/>
<rect x="2846.6" y="617.4" width="2.4" height="2.4" fill="#1f1f1f"/>
<rect x="2852.6" y="617.4" width="2.4" height="2.4" fill="#1f1f1f"/>
<rect x="2858.6" y="617.4" width="2.4" height="2.4" fill="#1f1f1f"/>
<rect x="2840.6" y="623.6" width="2.4" height="2.4" fill="#1f1f1f"/>
<rect x="2846.6" y="623.6" width="2.4" height="2.4" fill="#1f1f1f"/>
<rect x="2852.6" y="623.6" width="2.4" height="2.4" fill="#1f1f1f"/>
<rect x="2858.6" y="623.6" width="2.4" height="2.4" fill="#1f1f1f"/>
<rect x="36.4" y="135.4" width="41.6" height="41.2" fill="none" stroke="#f5a823" stroke-width="2.6" stroke-dasharray="8.2 4.2"/>
<path d="M50.7 145.2V167.4L57 161.2L67.4 159.6Z" fill="#e4e4e4"/>
<path d="M96.6 177.2V185.0H88.8Z" fill="#7f94b8"/>
<path d="M52.7 203.3A22 22 0 0 1 61.3 203.3" stroke="#f4f4f4" stroke-width="3.2" fill="none"/>
<path d="M61.3 203.3A22 22 0 0 1 69.2 206.6" stroke="#a03a40" stroke-width="3.2" fill="none"/>
<path d="M69.2 206.6A22 22 0 0 1 75.3 212.7" stroke="#f4f4f4" stroke-width="3.2" fill="none"/>
<path d="M75.3 212.7A22 22 0 0 1 78.6 220.6" stroke="#a03a40" stroke-width="3.2" fill="none"/>
<path d="M78.6 220.6A22 22 0 0 1 78.6 229.2" stroke="#f4f4f4" stroke-width="3.2" fill="none"/>
<path d="M78.6 229.2A22 22 0 0 1 75.3 237.1" stroke="#a03a40" stroke-width="3.2" fill="none"/>
<path d="M75.3 237.1A22 22 0 0 1 69.2 243.2" stroke="#f4f4f4" stroke-width="3.2" fill="none"/>
<path d="M69.2 243.2A22 22 0 0 1 61.3 246.5" stroke="#a03a40" stroke-width="3.2" fill="none"/>
<path d="M61.3 246.5A22 22 0 0 1 52.7 246.5" stroke="#f4f4f4" stroke-width="3.2" fill="none"/>
<path d="M52.7 246.5A22 22 0 0 1 44.8 243.2" stroke="#a03a40" stroke-width="3.2" fill="none"/>
<path d="M44.8 243.2A22 22 0 0 1 38.7 237.1" stroke="#f4f4f4" stroke-width="3.2" fill="none"/>
<path d="M38.7 237.1A22 22 0 0 1 35.4 229.2" stroke="#a03a40" stroke-width="3.2" fill="none"/>
<path d="M35.4 229.2A22 22 0 0 1 35.4 220.6" stroke="#f4f4f4" stroke-width="3.2" fill="none"/>
<path d="M35.4 220.6A22 22 0 0 1 38.7 212.7" stroke="#a03a40" stroke-width="3.2" fill="none"/>
<path d="M38.7 212.7A22 22 0 0 1 44.8 206.6" stroke="#f4f4f4" stroke-width="3.2" fill="none"/>
<path d="M44.8 206.6A22 22 0 0 1 52.7 203.3" stroke="#a03a40" stroke-width="3.2" fill="none"/>
<path d="M42.6 224.9H53.2M60.8 224.9H71.4M57 210.4V216.6M57 232.8V239.2" stroke="#c8c8c8" stroke-width="2" fill="none"/>
<g fill="#e6e6e6"><path d="M57 282.5L63 291.29999999999995H51Z"/><path d="M57 329.29999999999995L63 320.5H51Z"/><path d="M33.6 305.9L42.4 299.9V311.9Z"/><path d="M80.4 305.9L71.6 299.9V311.9Z"/><rect x="55.2" y="293.09999999999997" width="3.6" height="6"/><rect x="55.2" y="312.7" width="3.6" height="6"/><rect x="44.2" y="304.09999999999997" width="6" height="3.6"/><rect x="63.8" y="304.09999999999997" width="6" height="3.6"/></g>
<path d="M57 367.70000000000005L64.4 375.1L57 382.5L49.6 375.1Z" fill="#bdbdbd"/>
<path d="M38.8 372.1A18.4 18.4 0 0 1 71 363.1M75.2 378.1A18.4 18.4 0 0 1 43 387.1" stroke="#e6e6e6" stroke-width="2.2" fill="none"/>
<path d="M33.4 373.5H45.2L39.4 382.3Z M80.6 376.70000000000005H68.8L74.6 367.90000000000003Z" fill="#e6e6e6"/>
<path d="M41 444V429.4H72.8V461H58" stroke="#a4a4a4" stroke-width="2.2" fill="none"/>
<rect x="39" y="445" width="18" height="17.8" fill="#e6e6e6"/>
<path d="M58.6 443.2L66.4 435.6" stroke="#e6e6e6" stroke-width="2.4" fill="none"/><path d="M62 433.4H69V440.4Z" fill="#e6e6e6"/>
<path d="M96.6 465.4V473.2H88.8Z" fill="#6f6f6f"/>
<rect x="49" y="507.1" width="16" height="16" fill="#e6e6e6"/>
<g fill="#e6e6e6"><path d="M57 493.1L62.4 501.5H51.6Z"/><path d="M57 537.1L62.4 528.7H51.6Z"/><path d="M35 515.1L43.4 509.70000000000005V520.5Z"/><path d="M79 515.1L70.6 509.70000000000005V520.5Z"/></g>
<path d="M75.2 522.4A19.6 19.6 0 0 1 64.3 533.3" stroke="#e6e6e6" stroke-width="2" fill="none"/>
<path d="M49.7 533.3A19.6 19.6 0 0 1 38.8 522.4" stroke="#e6e6e6" stroke-width="2" fill="none"/>
<path d="M38.8 507.8A19.6 19.6 0 0 1 49.7 496.9" stroke="#e6e6e6" stroke-width="2" fill="none"/>
<path d="M64.3 496.9A19.6 19.6 0 0 1 75.2 507.8" stroke="#e6e6e6" stroke-width="2" fill="none"/>
<path d="M60.9 574.8L67.5 580.7L43.3 604.1L37.5 598.2Z" fill="#e6e6e6"/>
<path d="M36.3 599.8L41.8 605.3L33.2 608.8Z" fill="#e6e6e6"/>
<path d="M55.8 579.1L62.0 585.4" stroke="#2e2e2e" stroke-width="1.6" fill="none"/>
<path d="M36.2 610.6C44 617.6 52.4 616.6 60 605.6C67.4 597.4 76 598.4 82 610.6" stroke="#8fdcae" stroke-width="2.4" fill="none" stroke-linecap="round"/>
<path d="M96.6 615.2V623.0H88.8Z" fill="#6f6f6f"/>
<path d="M51.1 681.0L51.1 661.5L51.1 661.5" fill="none"/>
<path d="M51 681V663.4A18.6 18.6 0 0 1 69.6 681Z" fill="#8fdcae"/>
<path d="M51 658.4A23 23 0 0 1 73.6 681" stroke="#8fdcae" stroke-width="2" fill="none"/>
<path d="M38.8 642H50V681H80.2V689H38.8Z" fill="#e6e6e6"/>
<path d="M42.6 648H50M45.4 652H50M42.6 656H50M45.4 660H50M42.6 664H50M45.4 668H50M42.6 672H50M45.4 676H50M52 681V685.6M56 681V684M60 681V685.6M64 681V684M68 681V685.6M72 681V684M76 681V685.6" stroke="#2e2e2e" stroke-width="1.4" fill="none"/>
<path d="M37.5 729.4L46.9 720.6H76.7V734.2L67.3 742H37.5Z" fill="#8fdcae"/>
<path d="M37.5 729.4H67.3L76.7 720.6M67.3 729.4V742" stroke="#6fb58c" stroke-width="1" fill="none"/>
<path d="M37.5 742V765.4H67.3V742M67.3 765.4L76.7 756.6V734.2" stroke="#e6e6e6" stroke-width="2" fill="none" stroke-linejoin="round"/>
<path d="M96.6 767.3V775.1H88.8Z" fill="#6f6f6f"/>
<rect x="37.5" y="805" width="29.8" height="29.600000000000023" fill="#8fdcae"/>
<rect x="46.4" y="813.8" width="12.2" height="12.2" fill="#2e2e2e"/>
<path d="M37.5 805L46.4 813.8M67.3 805L58.6 813.8M37.5 834.6L46.4 826M67.3 834.6L58.6 826" stroke="#2e2e2e" stroke-width="1.6" fill="none"/>
<path d="M37.5 805L46.9 795.6H76.7V825.2L67.3 834.6M76.7 795.6L67.3 805" stroke="#e6e6e6" stroke-width="2" fill="none" stroke-linejoin="round"/>
<path d="M37.5 884.4L45.3 874.0L62.0 874.0L68.3 866.8L76.7 876.6L67.3 884.4Z" fill="#8fdcae"/>
<path d="M62.0 874.0L67.3 884.4" stroke="#2e2e2e" stroke-width="1.4" fill="none"/>
<path d="M45.3 874.0L52.7 866.8L68.3 866.8M37.5 884.4V904.5H67.3V884.4M67.3 904.5L76.7 895.1V876.6" stroke="#e6e6e6" stroke-width="2" fill="none" stroke-linejoin="round"/>
<path d="M37.5 974.7V945.5L46.9 936.1H76.7V965.3000000000001L67.3 974.7V945.5L76.7 936.1M37.5 945.5H48M55.4 945.5H67.3M37.5 974.7H48M55.4 974.7H67.3" stroke="#e6e6e6" stroke-width="2" fill="none" stroke-linejoin="round"/>
<path d="M51.7 974.7V945.5L62.4 935.5" stroke="#8fdcae" stroke-width="2.6" fill="none" stroke-linejoin="round"/>
<path d="M96.6 975.8V983.6H88.8Z" fill="#6f6f6f"/>
<path d="M37.5 1015.1L46.9 1005.7H76.7V1035.0L67.3 1044.4M76.7 1005.7L67.3 1015.1M37.5 1015.1H67.3V1044.4H37.5Z" stroke="#e6e6e6" stroke-width="2" fill="none" stroke-linejoin="round"/>
<path d="M60.5 1005.8L47.2 1015.7L59.5 1044" stroke="#8fdcae" stroke-width="2" fill="none"/>
<circle cx="60.5" cy="1005.8" r="3.3" fill="#8fdcae"/>
<circle cx="47.2" cy="1015.7" r="3.3" fill="#8fdcae"/>
<circle cx="59.5" cy="1044" r="3.3" fill="#8fdcae"/>
<path d="M96.6 1045.3V1053.1H88.8Z" fill="#6f6f6f"/>
<polygon points="52.7,1075.2 74.1,1082.4 75.1,1112.7 40.4,1112.7 40.4,1093.2" fill="#8fdcae"/>
<circle cx="52.7" cy="1075.2" r="3.5" fill="#ececec"/>
<circle cx="74.1" cy="1082.4" r="3.5" fill="#ececec"/>
<circle cx="75.1" cy="1112.7" r="3.5" fill="#ececec"/>
<circle cx="40.4" cy="1112.7" r="3.5" fill="#ececec"/>
<circle cx="40.4" cy="1093.2" r="3.5" fill="#ececec"/>
<path d="M54.6 1168.3L69.4 1153.5A21 21 0 1 1 39.8 1153.5Z" fill="#8fdcae"/>
<path d="M54.6 1168.3L39.8 1153.5A21 21 0 0 1 52.6 1147.8Z" fill="#8fdcae"/>
<path d="M54.6 1168.3L75.6 1168.3M54.6 1168.3L69.4 1183.1M54.6 1168.3L54.6 1189.3M54.6 1168.3L39.8 1183.1M54.6 1168.3L33.6 1168.3M54.6 1168.3L39.8 1153.5M54.6 1168.3L69.4 1153.5" stroke="#2e2e2e" stroke-width="1.4" fill="none"/>
<path d="M41.6 1150.6C46 1144.6 53 1141.4 60 1141.6V1160" stroke="#e6e6e6" stroke-width="2" fill="none"/>
<path d="M70.6 1153.6L76.4 1149.4C80 1156 80 1164 76.6 1171.4" stroke="#e6e6e6" stroke-width="2" fill="none"/>
<path d="M96.6 1184.4V1192.2H88.8Z" fill="#6f6f6f"/>
<path d="M55.8 1212.8L67.3 1215.7L73.8 1222.9L75.7 1232.7L73.8 1244.4L53.1 1250.8L40.0 1247.7L38.0 1234.6L41.4 1221.0Z" fill="#d7c1ea"/>
<path d="M55.8 1212.8L53.1 1220.4L51.7 1235.6L53.1 1250.8M41.4 1221.0L53.1 1220.4L67.3 1215.7M53.1 1220.4L68.7 1223.9L73.8 1222.9M38.0 1234.6L51.7 1235.6L69.3 1237.2L75.7 1232.7M68.7 1223.9L69.3 1237.2L68.3 1246.3" stroke="#2e2e2e" stroke-width="1.4" fill="none"/>
<path d="M96.6 1253.9V1261.7H88.8Z" fill="#6f6f6f"/>
<path d="M42 1324.4H37.5V1295.1L46.9 1285.6999999999998M55 1285.6999999999998H76.7V1315.0L67.3 1324.4H48.4V1295.1H67.3V1324.4M67.3 1295.1L76.7 1285.6999999999998" stroke="#e6e6e6" stroke-width="2" fill="none" stroke-linejoin="round"/>
<path d="M44.4 1324.4V1295.1L53.6 1285.5" stroke="#d7c1ea" stroke-width="2.8" fill="none" stroke-linejoin="round"/>
<path d="M31.2 1280.5L37 1276V1279.3H42V1281.8H37V1285Z" fill="#d7c1ea"/>
<path d="M96.6 1323.4V1331.2H88.8Z" fill="#6f6f6f"/>
<path d="M45.8 1364.4H68V1385.6H45.8ZM45.8 1364.4L49 1361.2H71.4V1382.4L68 1385.6M68 1364.4L71.4 1361.2" stroke="#e6e6e6" stroke-width="1.8" fill="none" stroke-linejoin="round"/>
<g fill="#d7c1ea"><path d="M56.8 1350.6000000000001L62.199999999999996 1358.2H51.4Z"/><path d="M56.8 1397.6000000000001L62.199999999999996 1390.0H51.4Z"/><path d="M34.8 1375.2L42.4 1369.8V1380.6000000000001Z"/><path d="M81.8 1375.2L74.19999999999999 1369.8V1380.6000000000001Z"/><path d="M56.8 1372.2L60.8 1366.2H52.8Z"/><path d="M56.8 1378.2L60.8 1384.2H52.8Z"/><path d="M53.8 1375.2L47.8 1371.2V1379.2Z"/><path d="M59.8 1375.2L65.8 1371.2V1379.2Z"/></g>
<path d="M96.6 1392.9V1400.7H88.8Z" fill="#6f6f6f"/>
<path d="M29.3 1434.6L38.0 1426.2L64.0 1426.2L84.3 1454.1L74.1 1462.9L46.8 1462.9Z" fill="#d7c1ea"/>
<path d="M29.3 1434.6L56.6 1435.6L74.1 1462.9M56.6 1435.6L64.0 1426.2" stroke="#2e2e2e" stroke-width="1.4" fill="none"/>
<path d="M73.2 1420.2L79.2 1415.6V1419H84.4V1421.6H79.2V1425Z" fill="#d7c1ea"/>
<path d="M96.6 1462.4V1470.2H88.8Z" fill="#6f6f6f"/>
<path d="M40.0 1510.7L40.0 1503.9L48.8 1494.7L79.4 1494.7L79.4 1523.4L69.3 1533.2L40.0 1533.2M69.3 1533.2L69.3 1503.9L79.4 1494.7M41.0 1503.9L62.4 1503.9" stroke="#e6e6e6" stroke-width="2" fill="none" stroke-linejoin="round"/>
<path d="M67.3 1504.3L30.2 1516.6L40.0 1531.2" stroke="#d7c1ea" stroke-width="1.8" fill="none"/>
<circle cx="30.2" cy="1516.6" r="3.4" fill="#d7c1ea"/>
<path d="M96.6 1533.1V1540.9H88.8Z" fill="#6f6f6f"/>
<path d="M2378 204.1L2377 145.4" stroke="#2d8fff" stroke-width="4.2" fill="none"/>
<path d="M2378 204.1L2420.1 183.8" stroke="#638b23" stroke-width="4.2" fill="none"/>
<path d="M2378 204.1L2427.2 222" stroke="#ff3352" stroke-width="4.2" fill="none"/>
<circle cx="2328.8" cy="188" r="12" fill="#9b3949"/><circle cx="2336" cy="225.6" r="12" fill="#8adb00"/><circle cx="2379" cy="263.9" r="12" fill="#3464a0"/>
<circle cx="2377" cy="145.4" r="15" fill="#2d8fff"/><circle cx="2420.1" cy="183.8" r="15" fill="#638b23"/><circle cx="2427.2" cy="222" r="15" fill="#ff3352"/>
<g font-family="Liberation Sans, sans-serif" font-size="18.5" text-anchor="middle"><text x="2377" y="152" fill="#0d2a4e">Z</text><text x="2420.1" y="190.4" fill="#1e2c0a">Y</text><text x="2427.2" y="228.6" fill="#4d0f19">X</text></g>
<circle cx="2435" cy="311.6" r="12.6" fill="#e2e2e2"/><path d="M2426 321L2418.6 328.4" stroke="#e2e2e2" stroke-width="4.4" stroke-linecap="round"/><path d="M2428.6 311.6H2441.4M2435 305.2V318" stroke="#303030" stroke-width="2.2"/>
<path transform="translate(2431,373) scale(1.08) translate(-2431,-371)" d="M2425.6 384C2421 380.6 2418.6 377.4 2416.6 374.8C2418 372.6 2421 373.2 2423.6 376L2424.8 377L2423.6 363.4C2423.4 360.8 2426.4 360.4 2426.8 363L2428.6 373.4L2429.6 360.6C2429.8 358 2433 358.2 2433 360.8L2433 373.4L2435.8 362.2C2436.4 359.8 2439.4 360.4 2439 363L2437.2 375L2441.6 368.6C2443 366.6 2445.6 368 2444.6 370.2C2442.4 376 2441.4 380.8 2438.8 384.8C2435.4 388.6 2429.4 387.6 2425.6 384Z" fill="#e2e2e2"/>
<circle cx="2422.5" cy="431.9" r="6.8" fill="#e2e2e2"/><circle cx="2437.2" cy="429.5" r="9.2" fill="#e2e2e2"/><circle cx="2422.5" cy="432.2" r="2.1" fill="none" stroke="#303030" stroke-width="1.3"/><circle cx="2437" cy="430" r="2.1" fill="none" stroke="#303030" stroke-width="1.3"/>
<path d="M2424.2 441.3H2438V453.2H2424.2ZM2419.5 443.8H2424.2V449.6H2419.5ZM2439.6 447.7L2447.9 442.7V452.9Z" fill="#e2e2e2"/>
<path d="M2423 487.4H2441.6L2447.6 510H2416.6Z M2429 487.4L2426.6 510M2435.4 487.4L2437.8 510M2421 495H2443.6M2419 502H2445.6" stroke="#e2e2e2" stroke-width="2.2" fill="none" stroke-linejoin="round"/>
<circle cx="1736.2" cy="843.6" r="30.6" fill="none" stroke="#232323" stroke-width="13.8"/>
<path d="M1750.6 878.2A37.5 37.5 0 0 1 1721.8 878.2L1727.1 865.5A23.7 23.7 0 0 0 1745.3 865.5Z" fill="#547bba"/>
</svg>
</body></html>
